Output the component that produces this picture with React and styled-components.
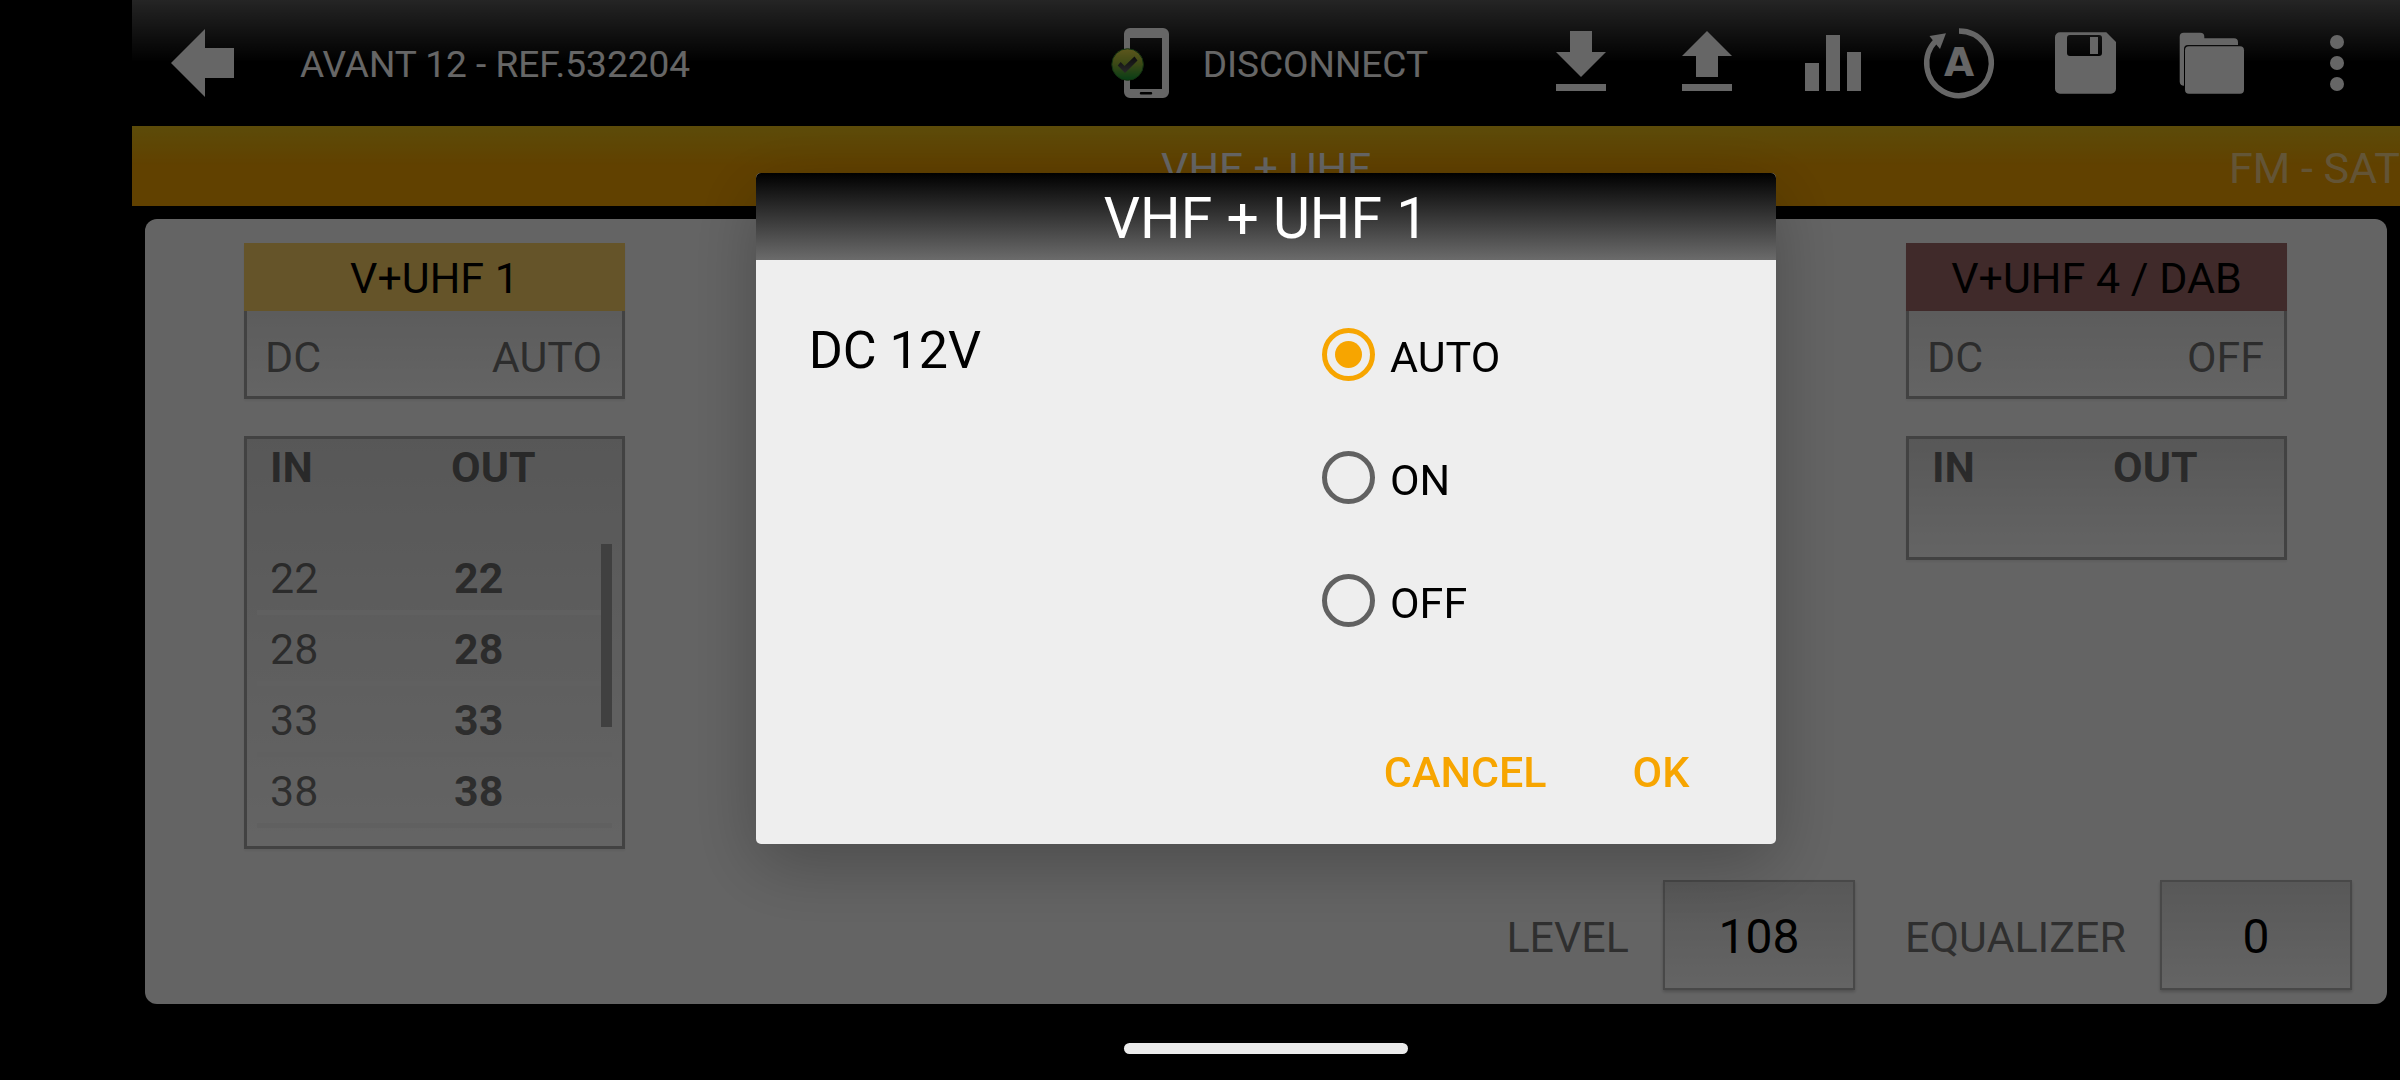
import React, { useState } from 'react'
import styled, { createGlobalStyle } from 'styled-components'

const GlobalStyle = createGlobalStyle`
  * {
    box-sizing: border-box;
  }
  body {
    margin: 0;
    background: #000;
    font-family: Roboto, "Liberation Sans", sans-serif;
  }
  button {
    margin: 0;
    padding: 0;
    border: none;
    background: transparent;
    font: inherit;
    color: inherit;
    cursor: pointer;
  }
`;

const Screen = styled.div`
  display: flex;
  flex-direction: column;
  min-height: 100vh;
  padding: 0 0 63px 132px;
`;

const TopBar = styled.header`
  display: flex;
  align-items: center;
  height: 126px;
  background: linear-gradient(#5c5c5c, #000 50%);
  color: #fff;
  font-size: 37px;
`;

const IconButton = styled.button`
  width: 126px;
  height: 126px;
  svg {
    display: block;
    fill: #fff;
  }
`;

const Title = styled.h1`
  margin: 0 auto 0 42px;
  padding-top: 2px;
  font-size: 37px;
  font-weight: 400;
`;

const ConnectButton = styled.button`
  display: flex;
  align-items: center;
  gap: 33px;
  margin-right: 90px;
  span {
    padding-top: 2px;
  }
`;

const TabStrip = styled.nav`
  display: grid;
  grid-template-columns: 1fr auto 1fr;
  align-items: center;
  height: 80px;
  background: linear-gradient(#e6bc18, #f2a200 50%);
`;

const Tab = styled.button`
  grid-column: ${({ $column }) => $column};
  justify-self: end;
  color: ${({ $active }) => ($active ? '#fff' : 'rgba(255, 255, 255, 0.55)')};
  font-size: 43px;
  line-height: 84px;
`;

const Panel = styled.main`
  display: flex;
  flex: 1;
  flex-direction: column;
  justify-content: space-between;
  margin: 13px;
  padding: 24px 35px 14px;
  border-radius: 12px;
  background: #fafafa;
`;

const Inputs = styled.div`
  display: flex;
  align-items: flex-start;
  justify-content: space-between;
  padding: 0 65px 0 64px;
`;

const InputColumn = styled.section`
  display: flex;
  flex-direction: column;
  gap: 37px;
  width: 381px;
`;

const InputCard = styled.button`
  color: rgba(0, 0, 0, 0.54);
  font-size: 43px;
  box-shadow: 0 2px 2px rgba(0, 0, 0, 0.06);
`;

const InputName = styled.span`
  display: block;
  height: 68px;
  background: ${({ $color }) => $color};
  color: #000;
  line-height: 71px;
`;

const InputPower = styled.span`
  display: flex;
  justify-content: space-between;
  padding: 8px 20px 0 18px;
  border: 3px solid #a6a6a6;
  border-top: none;
  background: linear-gradient(#e6e6e6, #fafafa);
  line-height: 77px;
`;

const ChannelBox = styled.div`
  position: relative;
  padding: 0 10px ${({ $filled }) => ($filled ? 18 : 13)}px;
  border: 3px solid #a6a6a6;
  background: linear-gradient(#dadada, #fafafa);
  box-shadow: 0 2px 2px rgba(0, 0, 0, 0.06);
`;

const ChannelTable = styled.table`
  width: 100%;
  border-collapse: collapse;
  table-layout: fixed;
  color: rgba(0, 0, 0, 0.54);
  font-size: 43px;
  text-align: left;
  th {
    height: 105px;
    padding: 3px 0 0 13px;
    line-height: 50px;
    vertical-align: top;
  }
  th:first-child {
    width: 181px;
  }
  td {
    padding: 2px 0 0 13px;
    border-bottom: 5px solid #f0f0f0;
    line-height: 64px;
  }
  td:last-child {
    padding-left: 16px;
    font-weight: 700;
  }
`;

const ScrollThumb = styled.div`
  position: absolute;
  top: 105px;
  right: 10px;
  width: 11px;
  height: 183px;
  background: #a0a0a0;
`;

const Settings = styled.div`
  display: flex;
  justify-content: flex-end;
  gap: 50px;
`;

const Setting = styled.div`
  display: flex;
  align-items: center;
  gap: 34px;
  color: rgba(0, 0, 0, 0.54);
  font-size: 43px;
  span {
    padding-top: 4px;
  }
`;

const ValueButton = styled.button`
  width: 192px;
  height: 110px;
  padding-top: 2px;
  border: 2px solid #b4b4b4;
  background: linear-gradient(#dcdcdc, #fafafa);
  box-shadow: 0 2px 3px rgba(0, 0, 0, 0.2);
  color: #000;
  font-size: 48px;
`;

const Scrim = styled.div`
  position: fixed;
  inset: 0;
  display: flex;
  align-items: center;
  justify-content: center;
  padding: 0 0 63px 132px;
  background: rgba(0, 0, 0, 0.6);
`;

const Dialog = styled.form`
  width: 45%;
  border-radius: 5px;
  overflow: hidden;
  background: #eee;
  box-shadow: 0 20px 70px rgba(0, 0, 0, 0.25);
`;

const DialogTitle = styled.h2`
  height: 87px;
  margin: 0;
  background: linear-gradient(#000, #6b6b6b);
  color: #fff;
  font-size: 57px;
  font-weight: 400;
  line-height: 92px;
  text-align: center;
`;

const DialogBody = styled.fieldset`
  display: grid;
  grid-template-columns: 9fr 7fr;
  margin: 0;
  padding: 33px 55px 38px 53px;
  border: none;
`;

const FieldName = styled.div`
  font-size: 52px;
  line-height: 115px;
`;

const Option = styled.label`
  display: flex;
  align-items: center;
  gap: 15px;
  height: 123px;
  font-size: 43px;
  span {
    padding-top: 4px;
  }
`;

const Radio = styled.input`
  appearance: none;
  display: grid;
  place-items: center;
  width: 53px;
  height: 53px;
  margin: 0;
  border: 5px solid #616161;
  border-radius: 50%;
  &:checked {
    border-color: #f7a500;
  }
  &:checked::before {
    content: '';
    width: 27px;
    height: 27px;
    border-radius: 50%;
    background: #f7a500;
  }
`;

const DialogActions = styled.div`
  display: flex;
  justify-content: flex-end;
  padding: 0 44px;
`;

const TextButton = styled.button`
  height: 144px;
  padding: 0 43px;
  color: #f7a500;
  font-size: 43px;
  font-weight: 500;
`;

const NavBar = styled.div`
  position: fixed;
  right: 0;
  bottom: 0;
  left: 132px;
  display: flex;
  align-items: center;
  justify-content: center;
  height: 63px;
`;

const NavHandle = styled.div`
  width: 284px;
  height: 11px;
  border-radius: 6px;
  background: #ebebeb;
`;

const icons = {
  Back: <path d="M39 63 73 29v19h29v30H73v19z" />,
  Download: <path d="M52 31h22v21h14L63 77 38 52h14zM38 84h50v7H38z" />,
  Upload: <path d="M63 31 88 56H74v21H52V56H38zM38 84h50v7H38z" />,
  Levels: <path d="M35 63h14v28H35zM56 35h14v56H56zM77 52h14v39H77z" />,
  Auto: (
    <>
      <path d="M63 31a32.3 32.3 0 1 1-23 9.6" fill="none" stroke="#fff" strokeWidth="5.4" />
      <path d="M50 33.3 33.500 36 37 40.5l7 8.5z" />
      <text x="63" y="76" textAnchor="middle" fontFamily="DejaVu Sans" fontWeight="700" fontSize="39">A</text>
    </>
  ),
  Save: (
    <path
      fillRule="evenodd"
      d="M38 32.3h46.3L94 42v46.7a5 5 0 0 1-5 5H38a5 5 0 0 1-5-5V37.3a5 5 0 0 1 5-5zM48 35a3 3 0 0 0-3 3v15a3 3 0 0 0 3 3h29a3 3 0 0 0 3-3V38a3 3 0 0 0-3-3zM68 37h8v17h-8z"
    />
  ),
  Open: (
    <>
      <path d="M35.7 32.7h16.6a4 4 0 0 1 4 4v1.6H86a4 4 0 0 1 4 4V45H40a4 4 0 0 0-4 4v36.7a4.3 4.3 0 0 1-4.3-4V36.7a4 4 0 0 1 4-4z" />
      <rect x="37" y="46.3" width="59" height="47.4" rx="4" />
    </>
  ),
  More: (
    <>
      <circle cx="63" cy="42" r="7" />
      <circle cx="63" cy="63" r="7" />
      <circle cx="63" cy="84" r="7" />
    </>
  ),
}

const Action = ({ name }) => (
  <IconButton type="button" aria-label={name}>
    <svg width="126" height="126" viewBox="0 0 126 126">{icons[name]}</svg>
  </IconButton>
)

const PhoneIcon = () => (
  <svg width="60" height="74" viewBox="0 0 60 74" aria-hidden="true">
    <defs>
      <linearGradient id="badge" x1="0" y1="0" x2="0" y2="1">
        <stop offset="0" stopColor="#e8d848" />
        <stop offset="0.45" stopColor="#9db838" />
        <stop offset="1" stopColor="#149a38" />
      </linearGradient>
      <linearGradient id="tick" x1="0" y1="0" x2="0" y2="1">
        <stop offset="0" stopColor="#222" />
        <stop offset="1" stopColor="#666" />
      </linearGradient>
    </defs>
    <path
      fill="#fff"
      fillRule="evenodd"
      d="M20 2h33a6 6 0 0 1 6 6v58a6 6 0 0 1-6 6H20a6 6 0 0 1-6-6V8a6 6 0 0 1 6-6zM20 12v51h32V12zM31 66a1 1 0 0 0 0 2.500h10a1 1 0 0 0 0-2.500z"
    />
    <circle cx="17.600" cy="38.500" r="15.800" fill="url(#badge)" stroke="#2c7a28" />
    <path d="M7.700 39.500l3-3.500 3.800 4L24.500 30.500l3 4L15 47z" fill="url(#tick)" />
  </svg>
)

const Input = ({ name, color, power, channels }) => (
  <InputColumn>
    <InputCard type="button">
      <InputName $color={color}>{name}</InputName>
      <InputPower>
        <span>DC</span>
        <span>{power}</span>
      </InputPower>
    </InputCard>
    <ChannelBox $filled={channels.length > 0}>
      <ChannelTable>
        <thead>
          <tr>
            <th>IN</th>
            <th>OUT</th>
          </tr>
        </thead>
        <tbody>
          {channels.map((channel) => (
            <tr key={channel}>
              <td>{channel}</td>
              <td>{channel}</td>
            </tr>
          ))}
        </tbody>
      </ChannelTable>
      {channels.length > 0 && <ScrollThumb />}
    </ChannelBox>
  </InputColumn>
)

const App = () => {
  const [power, setPower] = useState('AUTO')

  return (
    <>
      <GlobalStyle />
      <Screen>
        <TopBar>
          <Action name="Back" />
          <Title>AVANT 12 - REF.532204</Title>
          <ConnectButton type="button">
            <PhoneIcon />
            <span>DISCONNECT</span>
          </ConnectButton>
          <Action name="Download" />
          <Action name="Upload" />
          <Action name="Levels" />
          <Action name="Auto" />
          <Action name="Save" />
          <Action name="Open" />
          <Action name="More" />
        </TopBar>
        <TabStrip>
          <Tab type="button" $column={2} $active>VHF + UHF</Tab>
          <Tab type="button" $column={3}>FM - SAT</Tab>
        </TabStrip>
        <Panel>
          <Inputs>
            <Input name="V+UHF 1" color="#fdd266" power="AUTO" channels={[22, 28, 33, 38]} />
            <Input name="V+UHF 4 / DAB" color="#a06a6a" power="OFF" channels={[]} />
          </Inputs>
          <Settings>
            <Setting>
              <span id="level">LEVEL</span>
              <ValueButton type="button" aria-describedby="level">108</ValueButton>
            </Setting>
            <Setting>
              <span id="equalizer">EQUALIZER</span>
              <ValueButton type="button" aria-describedby="equalizer">0</ValueButton>
            </Setting>
          </Settings>
        </Panel>
      </Screen>

      <Scrim>
        <Dialog role="dialog" aria-labelledby="dialog-title" onSubmit={(e) => e.preventDefault()}>
          <DialogTitle id="dialog-title">VHF + UHF 1</DialogTitle>
          <DialogBody aria-labelledby="power-label">
            <FieldName id="power-label">DC 12V</FieldName>
            <div>
              {['AUTO', 'ON', 'OFF'].map((value) => (
                <Option key={value}>
                  <Radio
                    type="radio"
                    name="power"
                    value={value}
                    checked={power === value}
                    onChange={() => setPower(value)}
                  />
                  <span>{value}</span>
                </Option>
              ))}
            </div>
          </DialogBody>
          <DialogActions>
            <TextButton type="button">CANCEL</TextButton>
            <TextButton type="submit">OK</TextButton>
          </DialogActions>
        </Dialog>
      </Scrim>

      <NavBar>
        <NavHandle />
      </NavBar>
    </>
  )
}

export default App
